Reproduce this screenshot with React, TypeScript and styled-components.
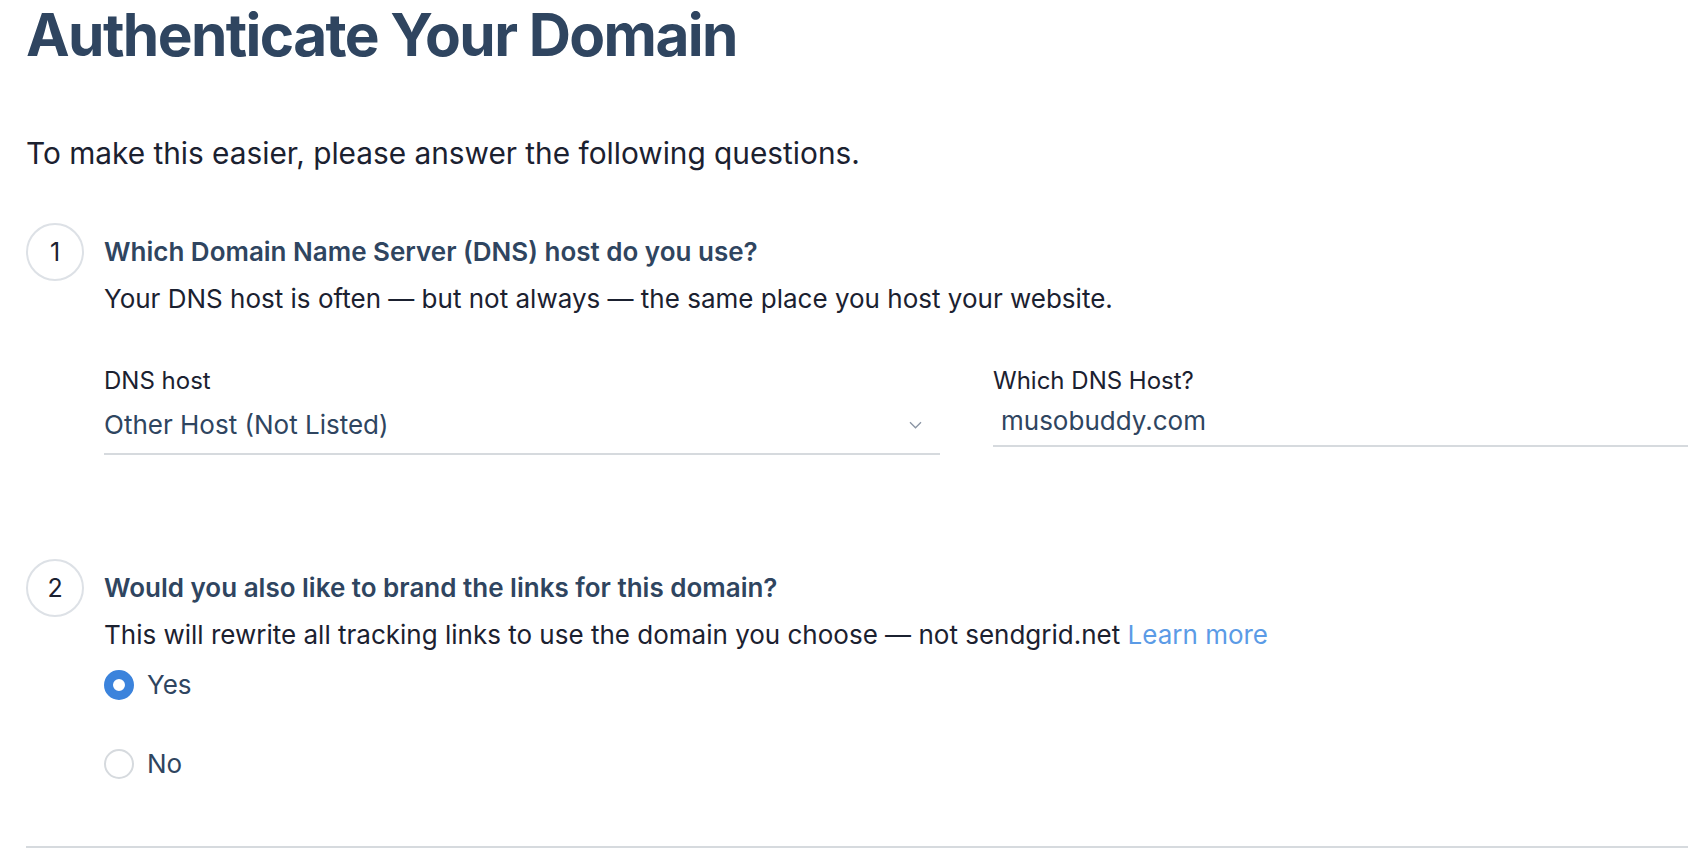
import React from "react";
import styled, { createGlobalStyle } from "styled-components";

const Global = createGlobalStyle`
  html, body { margin: 0; padding: 0; background: #ffffff; }
  body { font-family: Inter, "Liberation Sans", sans-serif; color: #1b2130; }
`;

const Page = styled.div`
  padding: 0 0 0 26px;
  overflow: hidden;
  height: 852px;
  box-sizing: border-box;
`;

const Title = styled.h1`
  margin: 0;
  padding-top: 3px;
  font-size: 58.5px;
  line-height: 64px;
  font-weight: 700;
  letter-spacing: -1.6px;
  color: #2f4560;
`;

const Intro = styled.p`
  margin: 68px 0 0;
  font-size: 29.8px;
  line-height: 36px;
  color: #1b2130;
`;

const Step = styled.section<{ $top: number }>`
  display: grid;
  grid-template-columns: 58px 1fr;
  column-gap: 20px;
  margin-top: ${(p) => p.$top}px;
`;

const Num = styled.div`
  width: 58px;
  height: 58px;
  box-sizing: border-box;
  border: 2px solid #dde1e6;
  border-radius: 50%;
  display: flex;
  align-items: center;
  justify-content: center;
  font-size: 25px;
  color: #1b2130;
`;

const StepBody = styled.div`
  display: flex;
  flex-direction: column;
  padding-top: 11px;
`;

const Question = styled.h2`
  margin: 0;
  font-size: 26px;
  line-height: 36px;
  font-weight: 600;
  color: #2f4560;
`;

const Desc = styled.p`
  margin: 11px 0 0;
  font-size: 26px;
  line-height: 36px;
  color: #1b2130;
`;

const Link = styled.a`
  color: #5b9be6;
  text-decoration: none;
`;

const Fields = styled.div`
  display: grid;
  grid-template-columns: 836px 1fr;
  column-gap: 53px;
  align-items: start;
  margin-top: 49px;
`;

const Field = styled.div`
  display: flex;
  flex-direction: column;
`;

const Label = styled.label`
  font-size: 24px;
  line-height: 30px;
  color: #1b2130;
`;

const Control = styled.div<{ $indent: number; $height: number }>`
  display: flex;
  align-items: center;
  justify-content: space-between;
  height: ${(p) => p.$height}px;
  padding: 0 18px 0 ${(p) => p.$indent}px;
  border-bottom: 2px solid #d6dade;
  font-size: 26px;
  color: #2f4560;
`;

const Radios = styled.div`
  display: flex;
  flex-direction: column;
  gap: 49px;
  margin-top: 17px;
`;

const RadioRow = styled.label`
  display: flex;
  align-items: center;
  gap: 13px;
  font-size: 26px;
  line-height: 30px;
  color: #2f4560;
`;

const RadioDot = styled.span<{ $on: boolean }>`
  width: 30px;
  height: 30px;
  box-sizing: border-box;
  border-radius: 50%;
  border: ${(p) => (p.$on ? "9.5px solid #3b83dc" : "2px solid #d6dade")};
  background: #fff;
`;

const Rule = styled.hr`
  margin: 67px 0 0;
  border: 0;
  border-top: 2px solid #d6dade;
`;

const Chevron = () => (
  <svg width="13" height="8" viewBox="0 0 13 8" fill="none">
    <path d="M1 1.2 L6.5 6.8 L12 1.2" stroke="#8a94a3" strokeWidth="1.3" />
  </svg>
);

export default function App() {
  return (
    <>
      <Global />
      <Page>
        <Title>Authenticate Your Domain</Title>
        <Intro>To make this easier, please answer the following questions.</Intro>
        <Step $top={52}>
          <Num>1</Num>
          <StepBody>
            <Question>Which Domain Name Server (DNS) host do you use?</Question>
            <Desc>Your DNS host is often — but not always — the same place you host your website.</Desc>
            <Fields>
              <Field>
                <Label>DNS host</Label>
                <Control $indent={0} $height={57}>
                  <span>Other Host (Not Listed)</span>
                  <Chevron />
                </Control>
              </Field>
              <Field>
                <Label>Which DNS Host?</Label>
                <Control $indent={8} $height={49}>
                  <span>musobuddy.com</span>
                </Control>
              </Field>
            </Fields>
          </StepBody>
        </Step>
        <Step $top={104}>
          <Num>2</Num>
          <StepBody>
            <Question>Would you also like to brand the links for this domain?</Question>
            <Desc>
              This will rewrite all tracking links to use the domain you choose — not sendgrid.net{" "}
              <Link href="#">Learn more</Link>
            </Desc>
            <Radios>
              <RadioRow>
                <RadioDot $on={true} />
                Yes
              </RadioRow>
              <RadioRow>
                <RadioDot $on={false} />
                No
              </RadioRow>
            </Radios>
          </StepBody>
        </Step>
        <Rule />
      </Page>
    </>
  );
}
